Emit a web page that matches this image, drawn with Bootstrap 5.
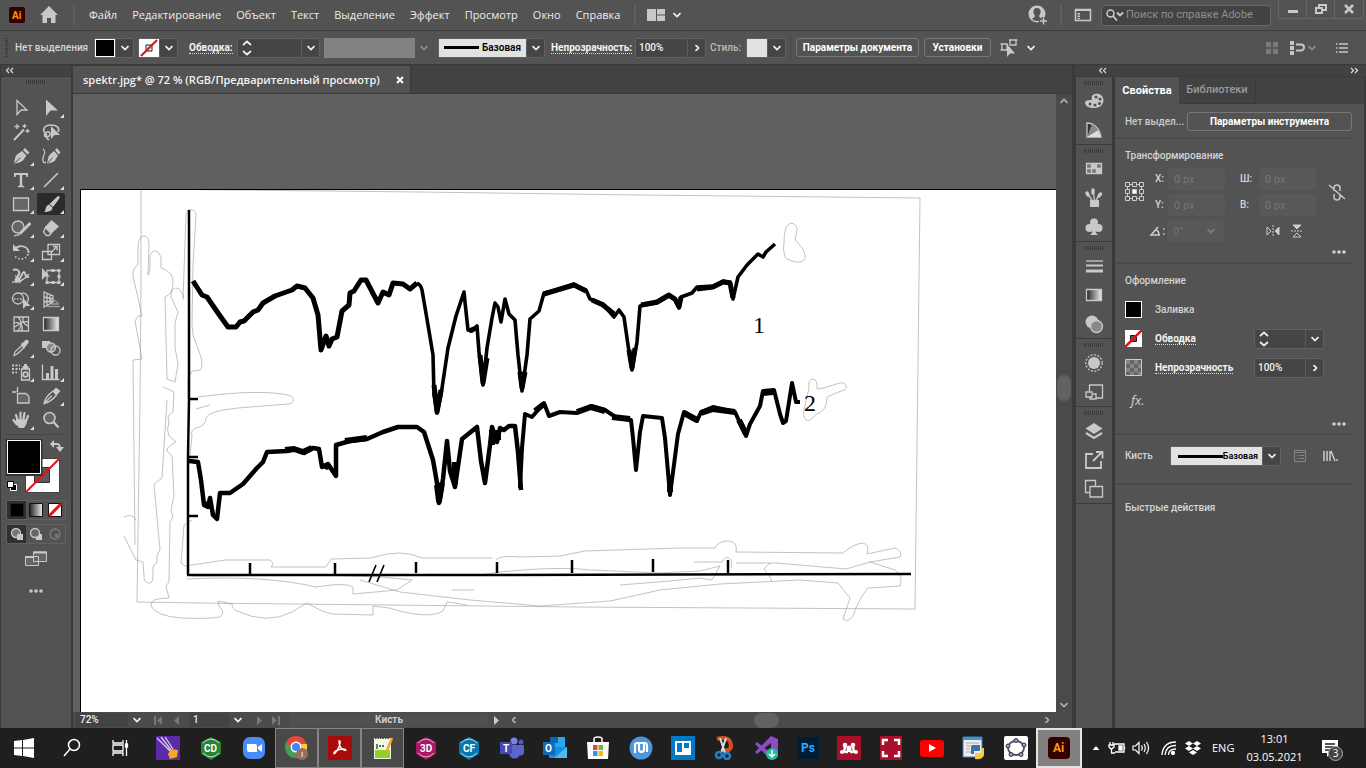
<!DOCTYPE html>
<html lang="ru">
<head>
<meta charset="utf-8">
<meta name="viewport" content="width=device-width, initial-scale=1">
<title>spektr.jpg — Illustrator</title>
<link rel="stylesheet" href="https://cdn.jsdelivr.net/npm/bootstrap@5.3.0/dist/css/bootstrap.min.css">
<script src="https://cdn.jsdelivr.net/npm/bootstrap@5.3.0/dist/js/bootstrap.bundle.min.js"></script>
<style>
:root{--ui:#535353;--dark:#424242;--line:#3a3a3a;--ico:#c8c8c8;--fld:#454545}
body{font-family:Roboto,"Open Sans",sans-serif;font-size:10px;line-height:14px;color:#d4d4d4;background:var(--ui);overflow:hidden}
button,input{font:inherit;color:inherit}
button{background:none;border:0;padding:0;display:flex;align-items:center;justify-content:center;flex:none}
svg{display:block;flex:none}
a{color:inherit;text-decoration:none}
.ic{width:20px;height:20px;fill:none;stroke:var(--ico);stroke-width:1.3}
.ic .f{fill:var(--ico);stroke:none}
.cv{width:8px;height:6px;fill:none;stroke:#f0f0f0;stroke-width:1.7}
.dim{opacity:.35}
.wide{font-family:"Open Sans","Noto Sans",sans-serif}
.menubar{height:31px;border-bottom:1px solid var(--line)}
.menubar nav{gap:15px;font-size:11px;line-height:16px;color:#ececec}
.vsep{width:2px;height:20px;background:#606060;flex:none}
.searchbox{width:170px;height:21px;background:#434343;border:1px solid #666;border-radius:3px;margin:0 7px 0 9px}
.searchbox input{background:none;border:0;outline:0;width:100%;font-size:11px;padding:0;color:#ccc}
.searchbox input::placeholder{color:#8f8f8f;opacity:1}
.winbtn{height:19px;border:1px solid #666;border-top:0;border-radius:0 0 3px 3px;margin-right:2px}
.winbtn button{width:28px;border-right:1px solid #666}
.winbtn button:last-child{border:0}
.ctl{height:34px;border-bottom:1px solid var(--line);padding-left:5px;font-weight:500}
.grip{width:3px;height:20px;background:repeating-linear-gradient(#3a3a3a 0 1px,transparent 1px 2px);flex:none}
.hgrip{width:20px;height:4px;background:repeating-linear-gradient(90deg,#3a3a3a 0 1px,transparent 1px 2px)}
.lab{white-space:nowrap;flex:none}
.dot{border-bottom:1px dotted #ddd;line-height:11px;color:#f4f4f4;font-weight:700}
.grp{display:flex;height:20px;border:1px solid #616161;border-radius:2px;background:var(--fld);flex:none}
.grp>*+*{border-left:1px solid #5c5c5c}
.grp button{width:18px}
.grp input{background:none;border:0;outline:0;min-width:0;padding:0 3px;color:#f2f2f2;font-weight:500}
.sw{width:20px;height:18px;flex:none}
.sw-k{background:#000;border:1px solid #fff!important}
.brushbox{background:#e2e2e2;color:#000;display:flex;align-items:center;justify-content:space-between;padding:0 5px;font-weight:600}
.brushbox i{height:3px;background:#000;display:block}
.obtn{height:19px;border:1px solid #777;border-radius:3px;color:#fff;font-weight:700}
.workspace{height:663px;min-height:0}
.tools{width:73px;border-right:2px solid var(--line);border-left:1px solid var(--line)}
.cap{height:12px;background:var(--dark);border-bottom:1px solid var(--line)}
.toolgrid{display:grid;grid-template-columns:30px 30px;grid-auto-rows:24px;padding:10px 0 2px 5px}
.toolgrid button{position:relative;margin:1px}
.toolgrid button.on{background:#2b2b2b;border-radius:2px}
.toolgrid .m::after{content:"";position:absolute;right:1px;bottom:1px;border:solid transparent;border-width:0 0 4px 4px;border-bottom-color:#ddd}
.mini{display:flex;border:1px solid #616161;width:60px;height:20px;margin-left:5px;border-radius:2px}
.mini button{flex:1}
.mini .on{background:#303030}
.doc{background:#606060;min-width:0}
.tabs{height:29px;background:var(--dark);border-bottom:1px solid var(--line)}
.doctab{background:var(--ui);padding:0 6px 0 10px;font-size:11px;font-weight:600;color:#f2f2f2;border:1px solid var(--line);border-width:1px 1px 0 0}
.artwrap{padding:95px 0 0 7px;min-width:0;min-height:0}
.artboard{background:#fff;border:1px solid #000;border-width:1px 0 0 1px;overflow:hidden;min-height:0}
.artboard svg{width:100%;height:100%}
.vscroll{width:16px;background:#4a4a4a}
.vthumb{width:14px;height:26px;border-radius:7px;background:#616161;margin-top:271px;margin-bottom:auto}
.status{height:16px;background:#4b4b4b}
.status input{background:#434343;border:0;padding:0 0 0 4px;outline:0;color:#eee;font-weight:500}
.dock{width:40px;border:solid var(--line);border-width:0 3px 0 1px}
.dockgrp{padding-top:4px;border-bottom:1px solid var(--line)}
.dockgrp .hgrip{margin:0 auto 1px}
.dockgrp button{height:29px;width:36px}
.dockwrap{width:294px;border-left:3px solid var(--line)}
.props{font-weight:500;border-right:2px solid var(--line)}
.ptabs{height:27px;background:var(--dark)}
.ptabs button{border-right:1px solid var(--line);border-bottom:1px solid var(--line);color:#999;font-size:11px}
.ptabs .on{background:var(--ui);color:#fff;border:0;font-weight:700}
.sect{margin-right:12px;padding-left:10px;border-bottom:2px solid #4a4a4a}
.prow{display:flex;align-items:center;height:26px}
.prow29{display:flex;align-items:center;height:29px}
.pf{width:57px;height:22px;background:#585858;border:0;border-radius:3px;padding:0 6px;color:#757575!important;font-weight:400!important;font-size:11px!important}
.taskbar{height:40px;background:#1f1f1f;color:#fff}
.taskbar .st{width:48px;height:40px}
.taskbar .apps{margin-left:2px}
.taskbar .apps button{flex:1;height:40px;min-width:0}
.taskbar .apps button:nth-child(-n+12){flex:0 0 43px}
.run{background:#494949;border:1px solid #858585!important}
.cur{background:#818181;border:2px solid #e5e5e5!important}
.taskbar svg{width:24px;height:24px}
.taskbar .tray svg{width:18px;height:18px}
.tray{gap:6px;font-size:11px;width:284px}
.badge-n{position:absolute;right:-4px;bottom:-4px;width:15px;height:15px;border-radius:8px;background:#444;border:1px solid #aaa;line-height:13px;text-align:center;font-size:10px}
</style>
</head>
<body class="d-flex flex-column min-vh-100">
<svg width="0" height="0" class="position-absolute">
 <symbol id="dn" viewBox="0 0 8 6"><path d="M.5 1 4 4.500 7.500 1"/></symbol>
 <symbol id="rt" viewBox="0 0 8 6"><path d="M2.500-.2 5.500 3l-3 3.200"/></symbol>
 <symbol id="spin" viewBox="0 0 10 16"><path d="M1 5l4-3.500L9 5M1 11l4 3.500L9 11"/></symbol>
 <linearGradient id="g"><stop offset="0" stop-color="#222"/><stop offset="1" stop-color="#eee"/></linearGradient>
</svg>

<header class="menubar d-flex align-items-center">
 <svg class="ms-2" style="margin-right:13px" width="18" height="18" viewBox="0 0 18 18"><rect x="1" y="1" width="16" height="16" rx="2" fill="#330000"/><text x="4" y="13" font-size="10" font-weight="700" fill="#ff9a00">Ai</text></svg>
 <svg width="20" height="18" viewBox="0 0 20 18"><path fill="#c8c8c8" d="M10 0 1 9h2.500v8H8v-5h4v5h4.500V9H19z"/></svg>
 <span class="vsep" style="margin:0 14px"></span>
 <nav class="wide d-flex text-nowrap"><a href="#">Файл</a><a href="#">Редактирование</a><a href="#">Объект</a><a href="#">Текст</a><a href="#">Выделение</a><a href="#">Эффект</a><a href="#">Просмотр</a><a href="#">Окно</a><a href="#">Справка</a></nav>
 <span class="vsep" style="margin:0 11px 0 14px"></span>
 <button class="gap-2" aria-label="Рабочая среда"><svg width="18" height="12" viewBox="0 0 18 12"><path fill="#c8c8c8" d="M0 0h9v12H0zM10 0h8v5.500h-8zM10 6.500h8V12h-8z"/></svg><svg class="cv"><use href="#dn"/></svg></button>
 <button class="ms-auto me-2" aria-label="Профиль"><svg class="ic" viewBox="0 0 20 20"><circle class="f" cx="9" cy="9" r="8.500"/><path fill="#535353" stroke="none" d="M9 3c-2.500 0-4 1.700-3.500 4.500.2 1.500 1 2.500 1.500 3.500-.5 1.500-2 2-3 3 2 2.500 8 2.500 10 0-1-1-2.500-1.500-3-3 .7-1 1.300-2 1.500-3.500C13 4.700 11.500 3 9 3z"/><path stroke="#535353" stroke-width="4" d="M11 16h9M15.500 12v8"/><path stroke-width="1.500" d="M12 16h7M15.500 12.500v7"/></svg></button>
 <span class="vsep ms-1 me-2"></span>
 <button class="ms-1" aria-label="Панели"><svg width="18" height="14" viewBox="0 0 18 14"><path fill="none" stroke="#c8c8c8" stroke-width="1.500" d="M1.500 1.500h15v11h-15z"/><path fill="#c8c8c8" d="M1 1h16v2H1zM3.500 5H6v1.500H3.500zM3.500 7.500H6V9H3.500zM3.500 10H6v1H3.500z"/></svg></button>
 <label class="searchbox d-flex align-items-center px-1"><svg width="18" height="12" viewBox="0 0 18 12"><circle cx="4.500" cy="4.500" r="3.500" fill="none" stroke="#ccc" stroke-width="1.500"/><path d="M7 7l4 4.500M11 3.500 14 6.500l3-3" fill="none" stroke="#ccc" stroke-width="1.800"/></svg><input style="margin-left:2px" aria-label="Поиск" placeholder="Поиск по справке Adobe"></label>
 <div class="winbtn d-flex align-self-start"><button aria-label="Свернуть"><svg width="12" height="12"><path fill="#c8c8c8" d="M1 7h10v3H1z"/></svg></button><button aria-label="Развернуть"><svg width="14" height="12" fill="none" stroke="#c8c8c8" stroke-width="2"><path d="M2 5h6v5H2zM5 4V2h7v5H9"/></svg></button><button aria-label="Закрыть"><svg width="12" height="12" stroke="#c8c8c8" stroke-width="2.500"><path d="M2 2l8 8M10 2l-8 8"/></svg></button></div>
</header>

<section class="ctl d-flex align-items-center">
 <span class="grip"></span>
 <span class="lab" style="width:79px;margin-left:7px">Нет выделения</span>
 <div class="grp"><span class="sw sw-k"></span><button aria-label="Заливка"><svg class="cv"><use href="#dn"/></svg></button></div>
 <div class="grp ms-1"><svg class="sw" viewBox="0 0 20 18"><path fill="#fff" d="M0 0h20v18H0z"/><path fill="#eee" stroke="#222" d="M7 6h6v6H7z"/><path stroke="#e01414" stroke-width="2.200" d="M2 17 18 1"/></svg><button aria-label="Обводка"><svg class="cv"><use href="#dn"/></svg></button></div>
 <div style="width:59px;padding-left:11px"><label for="sw1" class="lab dot">Обводка:</label></div>
 <div class="grp"><button aria-label="Шаг"><svg width="10" height="16" fill="none" stroke="#eee" stroke-width="1.700"><use href="#spin"/></svg></button><input id="sw1" style="width:45px"><button aria-label="Толщина"><svg class="cv"><use href="#dn"/></svg></button></div>
 <div class="ms-1" style="width:91px;height:20px;background:#828282"></div><button class="dim" style="width:18px" aria-label="Профиль переменной ширины"><svg class="cv"><use href="#dn"/></svg></button>
 <div class="grp" style="margin-left:5px"><div class="brushbox" style="width:87px"><i style="width:35px"></i>Базовая</div><button aria-label="Кисть"><svg class="cv"><use href="#dn"/></svg></button></div>
 <div style="width:84px;margin-left:6px"><label for="op1" class="lab dot">Непрозрачность:</label></div>
 <div class="grp"><input id="op1" style="width:51px" value="100%"><button aria-label="Ещё"><svg class="cv"><use href="#rt"/></svg></button></div>
 <span class="lab ms-1" style="width:36px;color:#bbb">Стиль:</span>
 <div class="grp"><span class="sw" style="background:#e2e2e2"></span><button aria-label="Стиль"><svg class="cv"><use href="#dn"/></svg></button></div>
 <span class="mx-1" style="width:1px;height:26px;background:#444"></span>
 <button class="obtn" style="width:123px;margin-left:1px">Параметры документа</button>
 <button class="obtn" style="width:67px;margin-left:5px">Установки</button>
 <button class="ms-2 gap-2" aria-label="Выделить похожие"><svg class="ic" viewBox="0 0 20 20"><path d="M3 6h5v6H3zM11 2h6v5h-6zM1.500 6H3M1.500 12H3M10 2h1M17 2h1.500"/><path class="f" stroke="#535353" d="M8 6v13l3-3.500h5z"/></svg><svg class="cv"><use href="#dn"/></svg></button>
 <button class="ms-auto dim" aria-label="Выравнивание"><svg class="ic" viewBox="0 0 20 20"><path class="f" d="M4 4h5v5H4zM11 4h5v5h-5zM4 11h5v5H4zM11 11h5v5h-5z"/></svg></button>
 <button style="margin-left:6px" aria-label="Привязка"><svg class="ic" viewBox="0 0 20 20"><path class="f" d="M2 3h4v4H2zM2 8h4v4H2zM2 13h4v4H2z"/><path stroke-width="2" d="M8 6.500h5a3 3 0 0 1 0 6H8"/></svg></button>
 <button class="dim" aria-label="Параметры привязки"><svg class="cv"><use href="#dn"/></svg></button>
 <button style="margin:0 14px 0 16px" aria-label="Меню"><svg class="ic" viewBox="0 0 20 20"><path d="M4 6h1.500M4 10h1.500M4 14h1.500M7 6h9M7 10h9M7 14h9" stroke-width="1.500"/></svg></button>
</section>

<main class="workspace d-flex flex-grow-1">
 <aside class="tools flex-shrink-0">
  <div class="cap d-flex align-items-center ps-1"><svg width="9" height="7" fill="none" stroke="#ddd" stroke-width="1.200"><path d="M4 1 1.500 3.500 4 6M8 1 5.500 3.500 8 6"/></svg></div>
  <div class="hgrip" style="margin:3px auto 2px"></div>
  <div class="toolgrid">
   <button aria-label="Выделение"><svg class="ic" viewBox="0 0 20 20"><path d="M6 2.500v14l4-4.500h6z"/></svg></button>
   <button class="m" aria-label="Прямое выделение"><svg class="ic" viewBox="0 0 20 20"><path class="f" d="M5 1.500V18l4.500-5.500H17z"/></svg></button>
   <button aria-label="Волшебная палочка"><svg class="ic" viewBox="0 0 20 20"><path stroke-width="2" d="M3 18 13 7.500"/><path d="M6 2v5M3.500 4.500h5M13.500 2v4M11.500 4h4M16.500 7v4M14.500 9h4"/></svg></button>
   <button aria-label="Лассо"><svg class="ic" viewBox="0 0 20 20"><path stroke-width="1.600" d="M5 12c-4-3-3-9 5-9 7 0 9 4 7 7M4 15c-2-5 5-7 5-3s-6 3-3 0M5 14c0 3 2 3 3 4"/><path class="f" d="M10 4v13l3.500-4H19z"/></svg></button>
   <button class="m" aria-label="Перо"><svg class="ic" viewBox="0 0 20 20"><path class="f" d="M3 18c1-5 1-8 3-9.500L11 5l4.500 4.500-3.500 5c-2 2-5 2-9 3.500zM12 4l2-2 4.500 4.500-2 2z"/><path stroke="#535353" stroke-width="1" d="m3.500 17.500 6-6"/></svg></button>
   <button aria-label="Кривизна"><svg class="ic" viewBox="0 0 20 20"><path class="f" d="M6 18c1-5 1-8 3-9.500L13 5l4 4.500-3 5c-2 2-4 2-8 3.500zM14 4l2-2 3.500 4.500-2 2z"/><path d="M2 3c5 4-2 7 0 12 .7 2 2 2 3 1"/><path stroke="#535353" stroke-width="1" d="m6.500 17.500 5-6"/></svg></button>
   <button class="m" aria-label="Текст"><svg class="ic" viewBox="0 0 20 20"><path class="f" d="M3 3h14v4h-1.500L15 5h-3.800v10.500l2 .5v1.300H6.800V16l2-.5V5H5l-.5 2H3z"/></svg></button>
   <button class="m" aria-label="Отрезок"><svg class="ic" viewBox="0 0 20 20"><path stroke-width="1.600" d="M3 17 17 3"/></svg></button>
   <button class="m" aria-label="Прямоугольник"><svg class="ic" viewBox="0 0 20 20"><path fill="#666" d="M2.500 4h15v12.500h-15z"/></svg></button>
   <button class="m on" aria-label="Кисть"><svg class="ic" viewBox="0 0 20 20"><path class="f" d="M17 2c2 0 2 1 1 3l-6 8-3.500-3zM8 10.500l3.500 3c0 3-3 4.500-8.500 4.500 2-1 1-2 2-4.500.5-1.500 1.500-2.500 3-3z"/></svg></button>
   <button class="m" aria-label="Shaper"><svg class="ic" viewBox="0 0 20 20"><circle cx="7" cy="9" r="6" fill="#666"/><path stroke-width="3" d="M9 15.500 19.500 5"/><path d="M3 18c2-1 4 0 6-2"/></svg></button>
   <button class="m" aria-label="Ластик"><svg class="ic" viewBox="0 0 20 20"><path class="f" d="M10.500 2 18 8.500l-7.500 7L4 9z"/><path d="m4.500 9.500 5.500 6-2 2H5.500l-3-3.500z"/></svg></button>
   <button class="m" aria-label="Поворот"><svg class="ic" viewBox="0 0 20 20"><path stroke-width="1.800" d="M4 7c4-5 14-3 13.500 4"/><path stroke-width="1.800" stroke-dasharray="1.500 2" d="M17 12c-2 7-12 6-13.500 1"/><path class="f" d="M2 2v7h7z"/></svg></button>
   <button class="m" aria-label="Масштаб"><svg class="ic" viewBox="0 0 20 20"><path d="M7 2.500h11.500v10H7zM1.500 9.500h9v8h-9z"/><path d="m10.500 10 5-5M12 4.500h4v4"/></svg></button>
   <button class="m" aria-label="Ширина"><svg class="ic" viewBox="0 0 20 20"><path stroke-width="2" d="M2 4c5-2 8 2 5 6s-2 5 1 3 3-7 5-7 0 6 5 5"/><path d="M1 16c6 1 12-2 17-8M4 10c3 0 6 4 5 7"/><circle class="f" cx="6" cy="14" r="2.500"/></svg></button>
   <button class="m" aria-label="Трансформирование"><svg class="ic" viewBox="0 0 20 20"><path d="M6 4.500h12v12H6z"/><path class="f" d="M1 2v12l3-3.500h5zM16.500 3h3v3h-3zM16.500 15h3v3h-3zM4.500 15h3v3h-3zM10.500 3h3v3h-3zM10.500 15h3v3h-3zM16.500 9h3v3h-3z"/></svg></button>
   <button class="m" aria-label="Создание фигур"><svg class="ic" viewBox="0 0 20 20"><circle cx="7" cy="8.500" r="5.500"/><path d="M9 3.500c7-2 11 5 6 10"/><path stroke-dasharray="1.500 1.500" d="M3 9h9"/><path class="f" d="M12 8v11l3-3h4.500z"/></svg></button>
   <button class="m" aria-label="Сетка перспективы"><svg class="ic" viewBox="0 0 20 20"><path d="M3 2v15l9-5V6zM3 7l9 2M3 12l9-1M6 3v12M9 4v9"/><path opacity=".6" d="M13 10l4 3M10 14h8M6 16.500h13"/></svg></button>
   <button aria-label="Сетка"><svg class="ic" viewBox="0 0 20 20"><path d="M3 3h14.500v14H3zM3 9c7-2 9 3 8 8M7 3c4 4 4 9 0 14M17 8c-8-2-9 4-14 5M12 3c-1 6 2 7 5 9"/></svg></button>
   <button aria-label="Градиент"><svg class="ic" viewBox="0 0 20 20"><path fill="url(#g)" d="M2.500 3.500h15v13h-15z"/></svg></button>
   <button class="m" aria-label="Пипетка"><svg class="ic" viewBox="0 0 20 20"><path d="M3 17.500c0-3 1-4 8-10l2 2c-6 6-7 7.500-10 8z"/><path class="f" d="m9.500 6 2-1 3-3c2-1 4 1 3 3l-3 3.500-1 2z"/></svg></button>
   <button aria-label="Переход"><svg class="ic" viewBox="0 0 20 20"><path class="f" d="M1 3h8v7H1z"/><circle cx="10" cy="9.500" r="4.500" fill="#888"/><circle cx="14.500" cy="12.500" r="4.500"/></svg></button>
   <button class="m" aria-label="Распыление"><svg class="ic" viewBox="0 0 20 20"><path d="M10.500 7h8v11h-8z"/><path class="f" d="M11.500 4h6v3h-6zM13 2h3v2h-3z"/><circle cx="14.500" cy="12.500" r="2.300" stroke-width="1.800"/><path stroke-width="2" stroke-dasharray="2 1.500" d="M1 3.500h8M1 7h8M1 10.500h5"/></svg></button>
   <button class="m" aria-label="Диаграмма"><svg class="ic" viewBox="0 0 20 20"><path d="M1.500 2.500v15h17"/><path class="f" d="M5 11h3v6H5zM9.500 4h3v13h-3zM14 7h3v10h-3z"/></svg></button>
   <button aria-label="Монтажная область"><svg class="ic" viewBox="0 0 20 20"><path fill="#666" d="M6.500 7.500H15l3 3V17H6.500z"/><path d="M6.500 1v5M1 6h4.500"/></svg></button>
   <button class="m" aria-label="Фрагмент"><svg class="ic" viewBox="0 0 20 20"><path d="M3 17.500C4 12 8 8 12 5l3.500 4c-3 4-7 7-12.500 8.500zm0 0 8-8"/><path class="f" d="m12 5 3-3.500L19.500 5l-3.500 4z"/></svg></button>
   <button class="m" aria-label="Рука"><svg class="ic" viewBox="0 0 20 20"><path fill="none" stroke-linecap="round" stroke-width="2.200" d="M6.500 10 5 5M9.500 9V2.500M12.500 9l1-6M15 11l2-5M5.500 14 2.500 10"/><path class="f" d="m5 9 11 .5-.5 4.500L13 18H8l-3.500-5z"/></svg></button>
   <button aria-label="Лупа"><svg class="ic" viewBox="0 0 20 20"><circle cx="8.500" cy="8" r="5.500" fill="#666" stroke-width="1.600"/><path stroke-width="2.200" d="m12.500 12 5 5.500"/></svg></button>
  </div>
  <div style="height:1px;background:#474747;margin:0 4px 4px"></div>
  <svg width="62" height="54" class="ms-1" viewBox="5 439 62 54"><path fill="#fff" stroke="#444" d="M25.500 458.500h34v34h-34z"/><path fill="#5a5a5a" stroke="#333" d="M34.500 467.500h15v15h-15z"/><path stroke="#e01414" stroke-width="2" d="M26 492l33-33"/><path stroke="#333" stroke-width="3" d="M7 440.500h34v34H7z"/><path fill="#000" stroke="#fff" d="M7.500 440.500h33v33h-33z"/><path fill="none" stroke="#ccc" stroke-width="2" d="M53 444h4q3 0 3 5"/><path fill="#ccc" d="M54 440v8l-4-4zM56 447h8l-4 5z"/><path fill="#000" stroke="#fff" d="M10.500 484.500h6v6h-6z"/><path fill="#fff" stroke="#000" d="M7.500 481.500h6v6h-6z"/></svg>
  <div class="mini" style="margin-top:7px"><button class="on" aria-label="Цвет"><svg width="14" height="14"><path stroke="#222" d="M.5.500h13v13H.5z"/></svg></button><button aria-label="Градиент"><svg width="14" height="14"><path fill="url(#g)" stroke="#111" d="M.5.500h13v13H.5z"/></svg></button><button aria-label="Нет"><svg width="14" height="14"><path fill="#fff" stroke="#111" d="M.5.500h13v13H.5z"/><path stroke="#e01414" stroke-width="3" d="M1 13 13 1"/></svg></button></div>
  <div class="mini mt-1"><button class="on" aria-label="Обычный режим"><svg class="ic" style="width:14px;height:14px"><circle cx="6" cy="6" r="4.500" fill="#777"/><path class="f" d="M7 7h6v6H7z"/></svg></button><button aria-label="Рисование сзади"><svg class="ic" style="width:14px;height:14px"><path class="f" d="M7 7h6v6H7z"/><circle cx="6" cy="6" r="4.500" fill="#666"/></svg></button><button class="dim" aria-label="Рисование внутри"><svg class="ic" style="width:14px;height:14px"><circle cx="7" cy="7" r="5"/><path class="f" d="M7 7h3v3H7z"/></svg></button></div>
  <button class="mx-auto" style="margin-top:7px" aria-label="Режим экрана"><svg width="22" height="16" viewBox="0 0 22 16"><path fill="#666" stroke="#c8c8c8" d="M.5 5.500h13v9H.5zM8.500 1h13v9.500h-13z"/><path fill="#c8c8c8" d="M8 .5h14v2H8zM0 5h8v2H0z"/></svg></button>
  <button class="mx-auto" style="margin-top:18px" aria-label="Ещё"><svg width="14" height="12" fill="#c8c8c8"><circle cx="2" cy="6" r="1.800"/><circle cx="7" cy="6" r="1.800"/><circle cx="12" cy="6" r="1.800"/></svg></button>
 </aside>

 <section class="doc flex-grow-1 d-flex flex-column">
  <div class="tabs d-flex"><div class="doctab wide d-flex align-items-center gap-3"><span class="text-nowrap">spektr.jpg* @ 72 % (RGB/Предварительный просмотр)</span><button aria-label="Закрыть документ"><svg width="8" height="8" stroke="#fff" stroke-width="2"><path d="m1 1 6 6M7 1 1 7"/></svg></button></div></div>
  <div class="d-flex flex-grow-1" style="min-height:0">
   <div class="artwrap flex-grow-1 d-flex"><div class="artboard flex-grow-1">
    <svg viewBox="81 190 975 522" preserveAspectRatio="xMinYMin meet" fill="none" font-family="Liberation Serif,serif">
     <g stroke="#999" stroke-width=".6">
      <path d="M141 190v90l-1 120-3 200 0 2 60 1 380 4 338 2 5-411-280-3-220-3-279-3"/>
      <path d="M138 265v-20q1-9 6-9t5 9l-1 30 2-6v-12q1-6 5-6t6 6v11q13 4 12 15 0 11-8 14l2 82 8 3 3-18-3-17 0-24 3-11-7-15q0-9 5-9t8 10M138 265q-6 3-5 11l9 40-4 0-3 5 7 38-9 1 2 185"/>
      <path d="M183 300l3-85q1-6 5-5 5 0 5 5l-3 50-1 60 1 10 8 22q2 12-1 13l-8 1-4 8 0 20"/>
      <path d="M198 397q60-8 90-2 5 1 5 5t-5 4l-50 4q-30 3-32 10 0 8-10 10-6 2-4 8l-2 20M196 409l14-4M163 387l11 5-1 20-5 4 1 6q-3 8 0 14l7 6q-10 5-9 9l5 5 2 40-3 14 2 7-3 5-1 60-3 4 3 12q-20 0-18 8 5 10 30 12 28 1 39-1 6-4-1-11l-1-5 14 3q0 5 5 7 30 14 55 1l15-9 15 8 10 3 41 1 0-9 16 2q40 12 54 3l4-9 20 3"/>
      <path d="M167 400l-5 78-8 6 6 66-3 5 0 7-4 5 0 11q-1 6-5 5t-4-7l-1-14-7-2-12-24M136 520q-4-7-12-3M192 520l-8 5-3 38 4 3 40-6h45q5 3 1 7l55 0 5-8 40-1q30-10 51 0h70"/>
      <path d="M496 560Q500 555 520 557L560 556 585 551 680 548 715 548Q718 541 728 541T736 552L843 553Q853 544 863 543 870 545 867 554L895 548Q903 551 900 557L870 562 895 570Q904 577 900 586L868 588Q858 600 853 616 848 623 843 619L850 598 838 583 800 580 720 584 660 590 610 601 540 606 470 600 400 592 360 580"/>
      <path d="M186 579q80-4 130 8 30-5 37 0l0 7 44-4 15-10-30-3-60-2-130 1M452 590h22M430 574q40 4 70-2 60-6 90-2l70 3 40-2 20-5-8 14-12-2-30 3-50 4M694 562l28 0q3-6 7-4t2 10M736 563h40l70 6 24-7M770 563l-6 6 6 8 2 5"/>
      <path d="M784 243q0-19 7-20 6 1 6 7l-2 10q9 8 10 15 1 8-9 7-5-1-6-2-5 0-6-7-1-5 0-10zM809 388q-1-9 4-9 5 1 4 10l6-1 17-5q5-1 6 3t-5 5l-14 6q0 14-10 17l-8 7q-7-1-5-11z"/>
     </g>
     <g stroke="#000" stroke-width="2.500"><path d="M189 210v190l-1 57v118M187 575l270 0 454-1"/><path d="M189 399h9M189 457h9M189 516h9M250 563v11M335 563v11M416 562v11M497 562v11M572 560v13M653 559v13M728 560v13"/><path stroke-width="1.600" d="m369 582 7-17M377 582l7-17"/></g>
     <g stroke="#000" stroke-width="3.600" stroke-linejoin="round">
      <path stroke-width="5" d="M193 281l9 14 5 2 11 16 10 14 8 0 4-5 4-1 9-9 5-2 5-7 12-7 17-6 5-4 8 2 8 10 5 17 3 35 5-14 3 10 3-7 5-2 5-26 7-6 1-12 4-2 7-11 5 0 12 23 5-11 6 3 4-12 10 1 7 5 7-6"/>
      <path d="M417 283q4 2 5 7l6 35 5 30 1 40 3 18 4-18 7-47 8-32 8-24 1 10 3 28 4 1 5-5 2 26 4 33 4-37 5-30 3-15 3 4 3 15 4-23 4 15 6 6 3 35 4 36 5-36 3-36 9-8 5-18 13-3 17-6 12 6 4 9 13 5 11 13 5-7 5 7 4 28 4 25 5-28 3-36 17-3 12-7 6 4 4 8 2-11 11-4 5-6 16-1 10-5 7 1 3 17 5-22 9-12 11-11 5 3 3-5 9-8"/>
      <path stroke-width="5" d="M434 385l3 27 4-22M480 355l3 28 4-25M520 372l2 16 3-16M629 350l3 18 3-20M469 331l7-3M544 294l13-4 17-5 12 6M592 300l11 5 11 9M641 305l16-3 12-7 6 4 4 8 2-10M697 289l16-2 10-5 7 1 3 15"/>
      <path stroke-width="4.500" d="M189 461l9 1 3 18 3 25 4 2 2-9 3 17 4 4 3-26 10 0 13-9 14-16 6-6 4-10 20-1 8-2 9 4 9-5 6 1 3 18 6-3 8 12 0-31 14-4 17-2 16-7 15-5h19l7 5 9 28 4 23 2 20 4-24 4-38 3 30 5 16 7-48 15-12 4 34 4 22 5-38 2-18 5 15 3-14 4 2 5-4 6 0 3 26 3 38"/>
      <path stroke-width="4" d="M520 488l2-40 3-34 7 3 12-14 5 13 11-4 17 1 14-7 14 4 12 8 14 2 2 18 3 32 4-38 3-16 19 2 3 20 5 57 8-61 6-22 13 9 4-9 12-5 22 5 11 24 4-12 10-18 3-15 11-1 6 24 3 9 3-2 6-38 4 19h4"/>
      <path stroke-width="6" d="M535 411l9-7M763 393l10-1M739 420l7 14M455 462v22M437 485l2 16 3-18M670 478v14M492 430v15M498 430v10M285 450l9-1 9 3 9-4M345 441l22-3M577 412l14-5 14 4M612 417l18 2M701 413l12-4 22 3M684 413l13 7M205 503l3 3M325 466l4 1"/>
     </g>
     <g fill="#000" font-size="24"><text x="753" y="333">1</text><text x="804" y="411">2</text></g>
    </svg>
   </div></div>
   <div class="vscroll d-flex flex-column align-items-center py-1"><svg class="cv" style="opacity:.6;transform:rotate(180deg)"><use href="#dn"/></svg><div class="vthumb"></div><svg class="cv" style="opacity:.6"><use href="#dn"/></svg></div>
  </div>
  <div class="status d-flex align-items-center">
   <input aria-label="Масштаб" value="72%" style="width:52px;margin-left:3px"><button style="width:17px" aria-label="Выбор масштаба"><svg class="cv"><use href="#dn"/></svg></button>
   <svg class="mx-2 dim" width="28" height="9" fill="#ccc"><path d="M1 0h2v9H1zM9 0v9L4 4.500zM26 0v9l-5-4.500z"/></svg>
   <input aria-label="Монтажная область" value="1" style="width:40px"><button style="width:17px" aria-label="Выбор области"><svg class="cv"><use href="#dn"/></svg></button>
   <svg class="mx-2 dim" width="28" height="9" fill="#ccc"><path d="M3 0v9l5-4.500zM18 0v9l5-4.500zM24 0h2v9h-2z"/></svg>
   <span class="fw-semibold text-center" style="width:198px;background:#505050">Кисть</span>
   <svg class="ms-1" width="10" height="9" fill="#ccc"><path d="M2 0v9l5-4.500z"/></svg>
   <svg class="cv ms-2" style="opacity:.6;transform:rotate(180deg)"><use href="#rt"/></svg>
   <div style="flex:237"></div><div class="rounded-pill" style="width:25px;height:15px;background:#626262"></div><div style="flex:265"></div>
   <svg class="cv" style="opacity:.6;margin-right:21px"><use href="#rt"/></svg>
  </div>
 </section>

 <aside class="dockwrap flex-shrink-0 d-flex flex-column">
  <div class="cap d-flex align-items-center justify-content-between"><svg style="margin-left:23px" width="9" height="7" fill="none" stroke="#ddd" stroke-width="1.200"><path d="M4 1 1.500 3.500 4 6M8 1 5.500 3.500 8 6"/></svg><svg style="margin-right:7px" width="9" height="7" fill="none" stroke="#ddd" stroke-width="1.200"><path d="m1 1 2.500 2.500L1 6M5 1l2.500 2.500L5 6"/></svg></div>
  <div class="d-flex flex-grow-1">
   <div class="dock flex-shrink-0">
    <div class="dockgrp"><div class="hgrip"></div>
     <button aria-label="Цвет"><svg class="ic" viewBox="0 0 20 20"><path class="f" d="M11 3c5-1 8 2 8.500 6 0 5-4 8-9 8-6 0-9-2-9.500-5 0-3 4-3 7-3-1-3 0-5.500 3-6z"/><g fill="#535353" stroke="none"><circle cx="12" cy="6" r="1.600"/><circle cx="16" cy="8" r="1.600"/><circle cx="15.500" cy="12.500" r="1.600"/><circle cx="11" cy="14" r="1.600"/><circle cx="6" cy="13" r="1.500"/></g></svg></button>
     <button aria-label="Каталог цветов"><svg class="ic" viewBox="0 0 20 20"><path fill="#333" d="M3 3v14h14C16 9 10 3 3 3z"/><path fill="#888" stroke="none" d="m3 17 5-13c3 2 5 4 6 6z"/><path fill="#ddd" stroke="none" d="m3 17 11-7 3 7z"/></svg></button></div>
    <div class="dockgrp"><div class="hgrip"></div>
     <button aria-label="Образцы"><svg class="ic" viewBox="0 0 20 20"><path fill="#777" d="M2.500 4.500h15v10h-15zM2.500 9.500h15M7.500 4.500v10M12.500 4.500v10"/><path class="f" d="M8 5h4v4H8zM13 10h4v4h-4z"/></svg></button>
     <button aria-label="Кисти"><svg class="ic" viewBox="0 0 20 20"><path class="f" d="M6 12h9v7H6z"/><path d="m8 12-5-7M10.500 12 9 3M12 12l5-7"/><path stroke-width="3.500" stroke-linecap="round" d="m3 5 1 2M9 2v3M16.500 6 15 8"/></svg></button>
     <button aria-label="Символы"><svg class="ic" viewBox="0 0 20 20"><g class="f"><circle cx="10" cy="5.500" r="4"/><circle cx="5.500" cy="11" r="4"/><circle cx="14.500" cy="11" r="4"/><path d="M9 8h2l1 8 2 2H6l2-2z"/></g></svg></button></div>
    <div class="dockgrp"><div class="hgrip"></div>
     <button aria-label="Обводка"><svg class="ic" viewBox="0 0 20 20"><path d="M2 5h17"/><path stroke-width="2" d="M2 9.500h17"/><path stroke-width="3" d="M2 15h17"/></svg></button>
     <button aria-label="Градиент"><svg class="ic" viewBox="0 0 20 20"><path fill="url(#g)" d="M2.500 4.500h15v11h-15z"/></svg></button>
     <button aria-label="Прозрачность"><svg class="ic" viewBox="0 0 20 20"><circle class="f" cx="8" cy="8" r="6.500"/><circle cx="12.500" cy="12.500" r="6" fill="#888"/></svg></button></div>
    <div class="dockgrp"><div class="hgrip"></div>
     <button aria-label="Оформление"><svg class="ic" viewBox="0 0 20 20"><circle class="f" cx="10" cy="10" r="6"/><circle cx="10" cy="10" r="8.200" stroke-dasharray="2 1.500"/></svg></button>
     <button aria-label="Стили"><svg class="ic" viewBox="0 0 20 20"><path d="M5.500 9V3h13v13H12M2 10h6v5H2z"/><path d="M9 12h3v5H6v-2"/></svg></button></div>
    <div class="dockgrp"><div class="hgrip"></div>
     <button aria-label="Слои"><svg class="ic" viewBox="0 0 20 20"><path class="f" d="m10 2 8.500 5.500L10 13 1.500 7.500z"/><path stroke-width="2.200" d="m2 12 8 5 8-5"/></svg></button>
     <button aria-label="Экспорт"><svg class="ic" viewBox="0 0 20 20"><path stroke-width="1.800" d="M9 4H2v14h15v-7M9 11l9-9M12 2h6.500v6.500"/></svg></button>
     <button aria-label="Монтажные области"><svg class="ic" viewBox="0 0 20 20"><path d="M6 13.500H1.500v-12h10V7M6 7.500h12.500v10.500H6z"/></svg></button></div>
   </div>
   <div class="props flex-grow-1">
    <div class="ptabs d-flex"><button class="on" style="width:64px">Свойства</button><button style="width:77px">Библиотеки</button></div>
    <div class="sect" style="height:35px"><div class="d-flex align-items-center justify-content-between pt-2"><span class="text-nowrap" style="color:#ccc">Нет выдел...</span><button class="obtn" style="width:165px">Параметры инструмента</button></div></div>
    <div class="sect" style="height:125px"><div style="padding:10px 0 3px">Трансформирование</div>
     <div class="d-flex">
      <svg style="margin:16px 10px 0 0" width="20" height="20" fill="none" stroke="#ccc"><path d="M.5.500h4v4h-4zM7.500.500h4v4h-4zM14.500.500h4v4h-4zM.5 7.500h4v4h-4zM14.500 7.500h4v4h-4zM.5 14.500h4v4h-4zM7.500 14.500h4v4h-4zM14.500 14.500h4v4h-4zM4 2.500h4M11 2.500h4M4 16.500h4M11 16.500h4M2.500 4v4M2.500 11v4M16.500 4v4M16.500 11v4"/><path fill="#fff" d="M7.500 7.500h4v4h-4z"/></svg>
      <div style="width:70px"><div class="prow"><label for="x" style="width:14px">X:</label><input id="x" class="pf" value="0 px"></div><div class="prow"><label for="y" style="width:14px">Y:</label><input id="y" class="pf" value="0 px"></div></div>
      <div style="width:76px;margin-left:15px"><div class="prow"><label for="w" style="width:19px">Ш:</label><input id="w" class="pf" value="0 px"></div><div class="prow"><label for="h" style="width:19px">В:</label><input id="h" class="pf" value="0 px"></div></div>
      <svg class="ic" style="margin:16px 0 0 11px" viewBox="0 0 20 20"><path stroke-width="1.500" d="M7 9V6q0-3 3-3t3 3v3M7 12v3q0 3 3 3t3-3v-3M2 3l16 14"/></svg>
     </div>
     <div class="prow" style="margin-left:24px"><svg width="18" height="12" viewBox="0 0 18 12" fill="none" stroke="#ccc" stroke-width="1.500"><path d="M11 10H2l7-8M7 5q3 1 3 5"/><path d="M14 4h1.500M14 9h1.500"/></svg><div class="d-flex align-items-center pf px-0"><input aria-label="Угол" class="pf" value="0°" style="width:40px"><svg class="cv" style="opacity:.25"><use href="#dn"/></svg></div>
      <svg style="margin-left:42px" width="14" height="12" viewBox="0 0 14 12" stroke="#ccc" fill="none"><path d="M1 2v8l4-4z"/><path d="M7 0v12" stroke-dasharray="2 1"/><path fill="#ccc" d="M13 2v8L9 6z"/></svg><svg style="margin-left:10px" width="14" height="14" viewBox="0 0 14 14" stroke="#ccc" fill="none"><path d="M3 13h8L7 9z"/><path d="M1 7h12" stroke-dasharray="2 1"/><path fill="#ccc" d="M3 1h8L7 5z"/></svg></div>
     <div class="d-flex justify-content-end pt-1"><svg style="margin-right:6px" width="14" height="15" fill="#d0d0d0"><circle cx="2" cy="4" r="1.800"/><circle cx="7" cy="4" r="1.800"/><circle cx="12" cy="4" r="1.800"/></svg></div>
    </div>
    <div class="sect" style="height:171px"><div style="padding:10px 0 7px">Оформление</div>
     <div class="prow29"><span class="sw-k" style="width:17px;height:17px;margin-right:13px"></span>Заливка</div>
     <div class="prow29"><svg width="17" height="17" style="margin-right:13px"><path fill="#fff" d="M0 0h17v17H0z"/><path fill="#555" stroke="#222" d="M5.500 5.500h6v6h-6z"/><path stroke="#e01414" stroke-width="2.500" d="M0 17 17 0"/></svg><div style="width:99px"><label class="lab dot" for="sw2">Обводка</label></div><div class="grp"><button aria-label="Шаг"><svg width="10" height="16" fill="none" stroke="#eee" stroke-width="1.700"><use href="#spin"/></svg></button><input id="sw2" style="width:32px"><button aria-label="Толщина"><svg class="cv"><use href="#dn"/></svg></button></div></div>
     <div class="prow29"><svg width="17" height="17" style="margin-right:13px"><path fill="#666" stroke="#ccc" d="M.5.500h16v16H.5z"/><path fill="#858585" d="M1 1h4v4H1zM9 1h4v4H9zM5 5h4v4H5zM13 5h3v4h-3zM1 9h4v4H1zM9 9h4v4H9zM5 13h4v3H5zM13 13h3v3h-3z"/></svg><div style="width:99px"><label class="lab dot" for="op2">Непрозрачность</label></div><div class="grp"><input id="op2" style="width:50px" value="100%"><button aria-label="Ещё"><svg class="cv"><use href="#rt"/></svg></button></div></div>
     <div class="prow29 fst-italic wide" style="font-size:13px;padding:6px 0 0 6px">fx.</div>
     <div class="d-flex justify-content-end"><svg style="margin-right:6px" width="14" height="20" fill="#d0d0d0"><circle cx="2" cy="13" r="1.800"/><circle cx="7" cy="13" r="1.800"/><circle cx="12" cy="13" r="1.800"/></svg></div>
    </div>
    <div class="sect d-flex align-items-center" style="height:50px;padding-bottom:6px"><span style="width:45px">Кисть</span><div class="grp"><div class="brushbox" style="width:91px;padding:0 4px 0 7px;font-size:9px"><i style="width:46px"></i>Базовая</div><button aria-label="Кисть"><svg class="cv"><use href="#dn"/></svg></button></div><svg style="margin:0 17px 0 13px" width="12" height="12" fill="none" stroke="#858585"><path d="M.5.500h11v11H.5zM1 2.500h10M3 5.500h1M5 5.500h5M3 8.500h1M5 8.500h5"/></svg><svg width="16" height="12" fill="none" stroke="#ccc" stroke-width="1.500"><path d="M1 1v10M4 1v10M7 1v10M8 1l4 10"/><path d="M13 10h2"/></svg></div>
    <div style="padding:16px 10px">Быстрые действия</div>
   </div>
  </div>
 </aside>
</main>

<footer class="taskbar d-flex align-items-center">
 <button class="st" aria-label="Пуск"><svg style="width:20px;height:20px" viewBox="0 0 20 20" fill="#fff"><path d="m0 3 8-1v7.500H0zM9 2l11-2v9.500H9zM0 10.500h8V18l-8-1zM9 10.500h11V20L9 18z"/></svg></button>
 <button class="st" aria-label="Поиск"><svg viewBox="0 0 24 24" fill="none" stroke="#fff" stroke-width="1.500"><circle cx="14" cy="9" r="5.500"/><path d="m10 13-6 7"/></svg></button>
 <button class="st" aria-label="Задачи"><svg viewBox="0 0 24 24" fill="none" stroke="#fff" stroke-width="1.300"><path d="M5 4v3h10V4M5 9h10v6H5zM5 20v-3h10v3M18.500 4v16"/><path fill="#fff" d="M17.500 8h2v3h-2z"/></svg></button>
 <div class="apps d-flex flex-grow-1">
  <button aria-label="Заметки"><svg viewBox="0 0 24 24"><path fill="#5b2aa5" d="M0 0h24v24H0z"/><path stroke="#d8d0e8" stroke-width="1.300" d="m1 2 13 13M5 1l10 13M9 1l8 12"/><path fill="#f7a52b" d="m15 13 7 1-1 7-7 2-2-5z"/></svg></button>
  <button aria-label="ChemDraw"><svg viewBox="0 0 24 24"><path fill="#2b8136" d="m12 1 10 5v12l-10 6-10-6V6z"/><path fill="none" stroke="#cfe8cf" d="M4 7q8-8 16 0M4 17q8 8 16 0"/><text x="5" y="16" font-size="10" font-weight="700" fill="#fff">CD</text></svg></button>
  <button aria-label="Zoom"><svg viewBox="0 0 24 24"><rect x="1" y="1" width="22" height="22" rx="7" fill="#4a8cf5"/><path fill="#fff" d="M5 8h8q2 0 2 2v6H7q-2 0-2-2zM16 11l4-3v8l-4-3z"/></svg></button>
  <button class="run" aria-label="Chrome"><svg viewBox="0 0 24 24"><circle cx="11" cy="11" r="11" fill="#e5483b"/><path fill="#38a352" d="M1 6l7 8 4 8C3 23-2 14 1 6z"/><path fill="#f8cd3a" d="M12 22l5-9-1-5h6c1 8-3 14-10 14z"/><circle cx="11" cy="11" r="5.500" fill="#fff"/><circle cx="11" cy="11" r="4" fill="#4285f4"/><circle cx="17" cy="18" r="6" fill="#947064"/><text x="16" y="21" font-size="8" fill="#fff">I</text></svg></button>
  <button class="run" aria-label="Acrobat"><svg viewBox="0 0 24 24"><path fill="#a90b0c" d="M0 0h24v24H0z"/><path fill="none" stroke="#fff" stroke-width="1.500" d="M11 5c2-1 1 5-1 8s-4 6-4 4 6-4 9-4 4 2 1 1-5-5-5-9z"/></svg></button>
  <button class="run" aria-label="Notepad++"><svg viewBox="0 0 24 24"><path fill="#f3f8e4" d="M3 2h17v21H3z"/><path fill="#8fd02c" d="M4 14h15v8H4z"/><path stroke="#444" stroke-width="2" stroke-dasharray="1.500 1" d="M4 2h15"/><path stroke="#333" stroke-width="1.300" d="M6 8v5M8 10h2M11 10h2"/><path stroke="#eda62b" stroke-width="2.500" d="M21 2l-6 15"/></svg></button>
  <button aria-label="Chem3D"><svg viewBox="0 0 24 24"><path fill="#a91765" d="m12 1 10 5v12l-10 6-10-6V6z"/><path fill="none" stroke="#eab3d2" d="M4 7q8-8 16 0M4 17q8 8 16 0"/><text x="6" y="16" font-size="10" font-weight="700" fill="#fff">3D</text></svg></button>
  <button aria-label="ChemFinder"><svg viewBox="0 0 24 24"><path fill="#0877ad" d="m12 1 10 5v12l-10 6-10-6V6z"/><path fill="none" stroke="#b3dced" d="M4 7q8-8 16 0M4 17q8 8 16 0"/><text x="6" y="16" font-size="10" font-weight="700" fill="#fff">CF</text></svg></button>
  <button aria-label="Teams"><svg viewBox="0 0 24 24"><circle cx="14" cy="5" r="3.500" fill="#7b83eb"/><circle cx="21" cy="6" r="2.500" fill="#5059c9"/><path fill="#5b63cf" d="M9 9h15v8q-2 4-4 2-3 5-8 3-3-2-3-5z"/><path fill="#444bb5" d="M0 6h12v12H0z"/><text x="3" y="16" font-size="10" font-weight="700" fill="#fff">T</text></svg></button>
  <button aria-label="Outlook"><svg viewBox="0 0 24 24"><path fill="#28a8ea" d="M7 1h15v11H7z"/><path fill="#0a64b0" d="M7 1h8v6H7z"/><path fill="#1490df" d="M6 11h18v11H6z"/><path fill="#50b9f0" d="m24 11-13 11h13z"/><path fill="#0f6cbd" d="M0 6h12v13H0z"/><text x="2" y="16" font-size="10" font-weight="700" fill="#fff">O</text></svg></button>
  <button aria-label="Store"><svg viewBox="0 0 24 24"><path fill="none" stroke="#fff" stroke-width="1.500" d="M8 6V3q0-2 4-2t4 2v3"/><path fill="#fff" d="M1 6h22l-1 17H2z"/><path fill="#e14c24" d="M7 9h4.500v5H7z"/><path fill="#7bb526" d="M12.500 9H17v5h-4.500z"/><path fill="#1ca0e8" d="M7 15h4.500v5H7z"/><path fill="#f7b613" d="M12.500 15H17v5h-4.500z"/></svg></button>
  <button aria-label="Mathpix"><svg viewBox="0 0 24 24"><circle cx="12" cy="12" r="11.500" fill="#4b96dc"/><path fill="none" stroke="#fff" stroke-width="2.200" d="M6 8v9M6 9q0-2 2.500-2h7q2.500 0 2.500 2.500V16M10 7v6q0 3 2.500 3t2.500-3V7"/></svg></button>
  <button aria-label="Trello"><svg viewBox="0 0 24 24"><path fill="#0079c8" d="M0 0h24v24H0z"/><path fill="#fff" d="M4 5h16v14H4z"/><path fill="#0079c8" d="M6 7h5v9H6zM13 7h5v5h-5z"/></svg></button>
  <button aria-label="Ножницы"><svg viewBox="0 0 24 24"><path fill="none" stroke="#d84e1d" stroke-width="4" d="M5 3q14-4 14 8-2 5-9 3"/><path stroke="#ddd" stroke-width="2" d="M8 2l5 15M14 2 9 17"/><g fill="none" stroke="#2581c4" stroke-width="2.500"><circle cx="7" cy="19" r="3"/><circle cx="15" cy="20" r="3"/></g></svg></button>
  <button aria-label="Visual Studio"><svg viewBox="0 0 24 24"><path fill="#8b4cc3" d="m17 0 7 3v18l-7 3L1 8l2-2 14 11V7L3 18l-2-2z"/><circle cx="18" cy="18" r="6" fill="#22bd9c"/><path stroke="#fff" stroke-width="1.500" fill="none" d="M18 14v7m-3-3 3 3 3-3"/></svg></button>
  <button aria-label="Photoshop"><svg viewBox="0 0 24 24"><rect x="1" y="1" width="22" height="22" rx="3" fill="#001d33"/><text x="5" y="16" font-size="12" font-weight="700" fill="#31a8ff">Ps</text></svg></button>
  <button aria-label="Mendeley"><svg viewBox="0 0 24 24"><path fill="#a70f2b" d="M0 0h24v24H0z"/><g fill="#fff"><circle cx="8" cy="9" r="2.300"/><circle cx="16" cy="9" r="2.300"/><circle cx="12" cy="12" r="2.600"/><circle cx="5" cy="16" r="2"/><circle cx="19" cy="16" r="2"/></g><path fill="none" stroke="#fff" stroke-width="2.500" d="m8 10-1 7M16 10l1 7M12 13l-3 4M12 13l3 4"/></svg></button>
  <button aria-label="Снимок"><svg viewBox="0 0 24 24"><path fill="#a9102b" d="M1 0h22v24H1z"/><path fill="none" stroke="#fff" stroke-width="2.500" d="M4 9V4h5M15 4h5v5M20 15v5h-5M9 20H4v-5"/></svg></button>
  <button aria-label="YouTube"><svg viewBox="0 0 24 24"><rect y="4" width="24" height="17" rx="3" fill="#f00"/><path fill="#fff" d="m9 8 7 4-7 4z"/></svg></button>
  <button aria-label="IDLE"><svg viewBox="0 0 24 24"><path fill="#eee" stroke="#3a7cb8" d="M1 1h19v20H1z"/><path fill="#3f95d1" d="M1 1h19v3H1z"/><path stroke="#aaa" d="M4 7h13M4 10h6M4 13h4M4 16h6"/><path fill="#3774a8" d="M11 9h7v6h-6v3H9v-6q0-3 2-3z"/><path fill="#f7cb3d" d="M19 12h3v7q-1 5-9 4v-6h6z"/></svg></button>
  <button aria-label="GeoGebra"><svg viewBox="0 0 24 24"><rect width="24" height="24" rx="2" fill="#fff"/><ellipse cx="12" cy="12" rx="8" ry="7" fill="none" stroke="#555" stroke-width="1.800"/><g fill="#9595f5" stroke="#333"><circle cx="12" cy="4.500" r="2"/><circle cx="20" cy="9" r="2"/><circle cx="17" cy="18.500" r="2"/><circle cx="7" cy="18.500" r="2"/><circle cx="4" cy="10" r="2"/></g></svg></button>
  <button class="cur" aria-label="Illustrator"><svg viewBox="0 0 24 24"><rect x="1" y="1" width="22" height="22" rx="4" fill="#330000"/><text x="6" y="16" font-size="12" font-weight="700" fill="#ff9a00">Ai</text></svg></button>
 </div>
 <div class="tray wide d-flex align-items-center ps-2">
  <svg viewBox="0 0 18 18" style="width:12px" fill="#fff"><path d="m4 12 5-6 5 6z"/></svg>
  <svg viewBox="0 0 18 18" fill="none" stroke="#fff" stroke-width="1.300"><path d="M6 5h10v8H7M16.500 7.500v3M2 3v3M5 3v3M1 6h5v2q-2 2-2.500 2t-2.500-2zM3.500 10v4H7"/><path fill="#fff" d="M11 7h3v4h-3z"/></svg>
  <svg viewBox="0 0 18 18" fill="none" stroke="#fff" stroke-width="1.200"><path d="M1 7h2.500L7 3.500v11L3.500 11H1zM9.500 6.500q1.500 2.500 0 5M12 5q2.500 4 0 8M14.500 3q4 6 0 12"/></svg>
  <svg class="ms-1" viewBox="0 0 18 18" fill="none" stroke="#fff" stroke-width="1.300"><path d="M2 16Q3 3 16 3M5 16Q6 6 16 6.500M8.500 16q0-6 7.500-6"/><circle cx="13" cy="14" r="1.500" fill="#fff"/></svg>
  <svg viewBox="0 0 18 18" fill="#fff"><path d="m5 2 4 2.500L5 7 1 4.500zM13 2l4 2.500L13 7 9 4.500zM5 7l4 2.500L5 12 1 9.500zM13 7l4 2.500-4 2.500-4-2.500zM9 11l4 2.500L9 16l-4-2.500z"/></svg>
  <span class="ms-1">ENG</span>
  <div class="text-center" style="line-height:18px;margin-left:6px">13:01<br>03.05.2021</div>
  <div class="position-relative ms-auto" style="margin-right:27px"><svg viewBox="0 0 18 18"><path fill="#fff" d="M1 1h16v13H9l-3 4v-4H1z"/><path stroke="#1f1f1f" stroke-width="1.500" d="M4 5h10M4 8h10M4 11h6"/></svg><span class="badge-n">3</span></div>
 </div>
</footer>
</body>
</html>
